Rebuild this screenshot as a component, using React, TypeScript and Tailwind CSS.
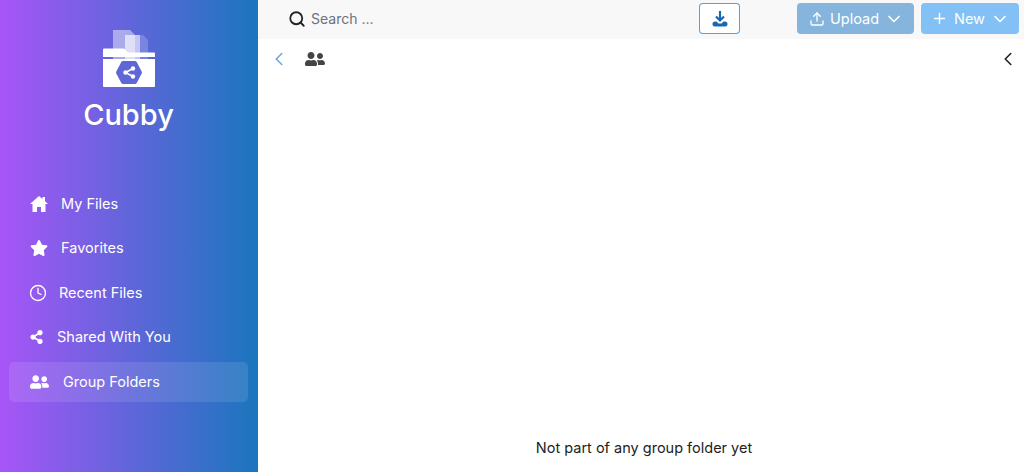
import { FaStar, FaShareAlt, FaUserFriends } from "react-icons/fa";
import { Search, Upload, Plus, ChevronDown, ChevronLeft, Clock } from "lucide-react";

function Logo() {
  return (
    <svg width="54" height="60" viewBox="0 0 54 60" className="block">
      <path d="M11 0h17l5 5v24H11z" fill="#fff" fillOpacity="0.45" />
      <path d="M23 5h18l5 5v20H23z" fill="#fff" fillOpacity="0.2" />
      <path d="M23 5h15v26H23z" fill="#fff" fillOpacity="0.55" />
      <path d="M1 19.500a1 1 0 0 1 1-1h20l4 4h26a1 1 0 0 1 1 1V27H1z" fill="#fff" />
      <path d="M1 29h52v27a1 1 0 0 1-1 1H2a1 1 0 0 1-1-1z" fill="#fff" />
      <path d="M21 31h12a2 2 0 0 1 1.700 1l5 9.500a2 2 0 0 1 0 2l-5 9.500a2 2 0 0 1-1.700 1H21a2 2 0 0 1-1.700-1l-5-9.500a2 2 0 0 1 0-2l5-9.500a2 2 0 0 1 1.700-1z" fill="#5f66d6" />
      <path d="M31 38.500l-7.500 4 7.500 4" fill="none" stroke="#fff" strokeWidth="1.500" />
      <circle cx="31" cy="38.500" r="2.200" fill="#fff" />
      <circle cx="23.500" cy="42.500" r="2.200" fill="#fff" />
      <circle cx="31" cy="46.500" r="2.200" fill="#fff" />
    </svg>
  );
}

export default function App() {
  return (
    <div className="flex h-[472px] w-[1024px] overflow-hidden bg-white font-['Inter','Liberation_Sans',sans-serif]">
      <aside className="flex w-[258px] shrink-0 flex-col bg-linear-to-r/srgb from-[#a855f7] to-[#1a76bd] text-white">
        <div className="flex flex-col items-center pt-[30px] pr-[1px]">
          <Logo />
          <div className="mt-[7px] text-[29px] leading-[36px] font-medium">Cubby</div>
        </div>
        <nav className="mt-[50.500px] flex flex-col gap-[4.500px] pr-[10px] pl-[9px] text-[14.500px] font-normal">
          <div className="flex h-10 items-center pl-[21px]">
            <svg width="18" height="16" viewBox="0 0 18 16" fill="currentColor">
              <path d="M9 0L0 8h2.500v8h4.500v-5h4v5h4.500V8H18l-3-2.700V1h-2.500v2z" />
            </svg>
            <span className="ml-[13px]">My Files</span>
          </div>
          <div className="flex h-10 items-center pl-[21px]">
            <FaStar className="h-[16px] w-[18px]" />
            <span className="ml-[13px]">Favorites</span>
          </div>
          <div className="flex h-10 items-center pl-[20px]">
            <Clock className="h-[18px] w-[18px]" strokeWidth={1.800} />
            <span className="ml-[12px]">Recent Files</span>
          </div>
          <div className="flex h-10 items-center pl-[21px]">
            <FaShareAlt className="h-[14px] w-[13px]" />
            <span className="ml-[14px]">Shared With You</span>
          </div>
          <div className="flex h-10 items-center rounded-[5px] bg-white/10 pl-[21px]">
            <FaUserFriends className="h-[18px] w-[19px]" />
            <span className="ml-[14px]">Group Folders</span>
          </div>
        </nav>
      </aside>
      <main className="flex min-w-0 flex-1 flex-col">
        <header className="flex h-[39px] shrink-0 items-center bg-[#f8f8f8] pr-[5px] pb-[2px]">
          <Search className="ml-[30px] h-[18px] w-[18px] text-[#222222]" strokeWidth={2.400} />
          <span className="ml-[5px] whitespace-nowrap text-[14px] text-[#6b7280]">Search ...</span>
          <button className="ml-auto flex h-[31px] w-[41px] items-center justify-center rounded-[4px] border border-[#1a76bd]/70 bg-white">
            <svg width="16" height="17" viewBox="0 0 16 17" className="text-[#1868b3]">
              <path d="M8 1v9M4 6.500l4 4 4-4" fill="none" stroke="currentColor" strokeWidth="2.200" />
              <path d="M3 11.500h1.500L6.500 13.500h3l2-2H13a2.500 2.500 0 0 1 2.500 2.500v0a2.500 2.500 0 0 1-2.500 2.500H3A2.500 2.500 0 0 1 .5 14v0A2.500 2.500 0 0 1 3 11.500z" fill="currentColor" />
            </svg>
          </button>
          <button className="ml-[57px] flex h-[31px] w-[117px] items-center rounded-[4px] bg-[#85b5dc] pl-[12px] text-[14.500px] text-white">
            <Upload className="h-[16px] w-[16px]" />
            <span className="ml-[5px]">Upload</span>
            <ChevronDown className="ml-[5px] h-[20px] w-[20px]" />
          </button>
          <button className="ml-[7px] flex h-[31px] w-[98px] items-center rounded-[4px] bg-[#82c0f5] pl-[10px] text-[14.500px] text-white">
            <Plus className="h-[17px] w-[17px]" />
            <span className="ml-[6px]">New</span>
            <ChevronDown className="ml-[5px] h-[20px] w-[20px]" />
          </button>
        </header>
        <div className="flex h-[39px] shrink-0 items-center pr-[5px]">
          <ChevronLeft className="ml-[10px] h-[22px] w-[22px] text-[#6fa8dc]" strokeWidth={1.750} />
          <FaUserFriends className="ml-[15px] h-[20px] w-[20px] text-[#444444]" />
          <ChevronLeft className="ml-auto h-[22px] w-[22px] text-[#222222]" strokeWidth={1.750} />
        </div>
        <div className="flex flex-1 items-end justify-center pb-[14px] pl-[6px] text-[14.500px] text-[#222222]">
          <span className="leading-5">Not part of any group folder yet</span>
        </div>
      </main>
    </div>
  );
}
